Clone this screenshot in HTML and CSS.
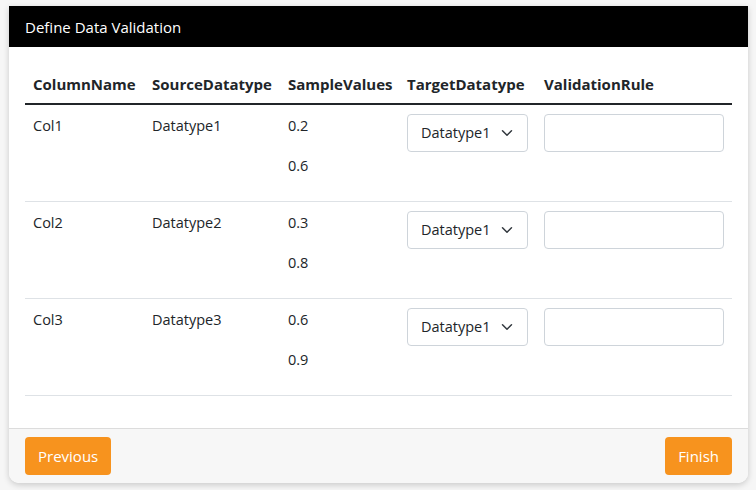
FILE: index.html
```html
<!DOCTYPE html>
<html>
<head>
<meta charset="utf-8">
<link rel="stylesheet" href="styles.css">
</head>
<body>
<div class="card">
  <div class="card-header">Define Data Validation</div>
  <div class="card-body">
    <table class="grid">
      <thead>
        <tr>
          <th class="c1">ColumnName</th>
          <th class="c2">SourceDatatype</th>
          <th class="c3">SampleValues</th>
          <th class="c4">TargetDatatype</th>
          <th class="c5">ValidationRule</th>
        </tr>
      </thead>
      <tbody>
        <tr>
          <td>Col1</td>
          <td>Datatype1</td>
          <td><p class="val">0.2</p><p class="val">0.6</p></td>
          <td><div class="select">Datatype1<svg class="chev" width="12" height="12" viewBox="0 0 16 16"><path d="M2 5l6 6 6-6" fill="none" stroke="#343a40" stroke-width="2" stroke-linecap="round" stroke-linejoin="round"/></svg></div></td>
          <td><div class="input"></div></td>
        </tr>
        <tr>
          <td>Col2</td>
          <td>Datatype2</td>
          <td><p class="val">0.3</p><p class="val">0.8</p></td>
          <td><div class="select">Datatype1<svg class="chev" width="12" height="12" viewBox="0 0 16 16"><path d="M2 5l6 6 6-6" fill="none" stroke="#343a40" stroke-width="2" stroke-linecap="round" stroke-linejoin="round"/></svg></div></td>
          <td><div class="input"></div></td>
        </tr>
        <tr>
          <td>Col3</td>
          <td>Datatype3</td>
          <td><p class="val">0.6</p><p class="val">0.9</p></td>
          <td><div class="select">Datatype1<svg class="chev" width="12" height="12" viewBox="0 0 16 16"><path d="M2 5l6 6 6-6" fill="none" stroke="#343a40" stroke-width="2" stroke-linecap="round" stroke-linejoin="round"/></svg></div></td>
          <td><div class="input"></div></td>
        </tr>
      </tbody>
    </table>
  </div>
  <div class="card-footer">
    <button class="btn">Previous</button>
    <button class="btn">Finish</button>
  </div>
</div>
</body>
</html>
```
FILE: styles.css
```css
html, body {
  margin: 0;
  padding: 0;
}
body {
  background: #f6f6f6;
  font-family: "Open Sans", "Noto Sans", sans-serif;
  font-size: 14.5px;
  color: #212529;
  padding: 6px 8px 7px 9px;
}
.card {
  width: 739px;
  background: #fff;
  border-radius: 0 0 10px 10px;
  box-shadow: 0 2px 6px rgba(0,0,0,0.18);
  overflow: hidden;
}
.card-header {
  background: #000;
  color: #fff;
  height: 41px;
  display: flex;
  align-items: center;
  padding-left: 16px;
  font-size: 15px;
}
.card-body {
  padding: 16px 16px 16px 16px;
}
.grid {
  width: 100%;
  table-layout: fixed;
  border-collapse: collapse;
  margin-bottom: 16px;
}
.grid th {
  text-align: left;
  font-weight: 700;
  font-size: 15px;
  padding: 10px 8px 8px 8px;
  line-height: 22px;
  border-bottom: 2px solid #212529;
  white-space: nowrap;
}
.c1 { width: 103px; }
.c2 { width: 120px; }
.c3 { width: 103px; }
.c4 { width: 121px; }
.grid td {
  vertical-align: top;
  padding: 9px 8px 7px 8px;
  line-height: 24px;
  border-bottom: 1px solid #dee2e6;
}
.val {
  margin: 0 0 16px 0;
}
.select {
  width: 121px;
  height: 38px;
  box-sizing: border-box;
  border: 1px solid #ced4da;
  border-radius: 4px;
  display: flex;
  align-items: center;
  justify-content: space-between;
  padding: 0 14px 0 13px;
}
.input {
  width: 180px;
  height: 38px;
  box-sizing: border-box;
  border: 1px solid #ced4da;
  border-radius: 4px;
}
.card-footer {
  background: #f7f7f7;
  border-top: 1px solid #dcdcdc;
  padding: 8px 16px;
  display: flex;
  justify-content: space-between;
}
.btn {
  background: #f7931e;
  color: #fff;
  border: none;
  border-radius: 4px;
  height: 38px;
  padding: 0 13px;
  font-family: inherit;
  font-size: 15px;
}
```
